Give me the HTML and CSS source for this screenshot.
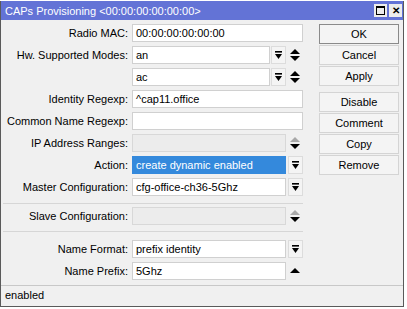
FILE: index.html
```html
<!DOCTYPE html>
<html lang="en">
<head>
    <meta charset="UTF-8">
    <title>CAPs Provisioning</title>
    <link rel="stylesheet" href="styles.css">
</head>
<body>

    <!-- Provisioning dialog -->
    <div class="window">
        <div class="titlebar">
            <span class="title">CAPs Provisioning &lt;00:00:00:00:00:00&gt;</span>
            <div class="win-btns">
                <span class="wbtn"><span class="max-icon"></span></span>
                <span class="wbtn close">&#x2715;</span>
            </div>
        </div>

        <div class="body">
            <!-- Fields -->
            <div class="form">
                <div class="row">
                    <label>Radio MAC:</label>
                    <div class="field"><span class="input full">00:00:00:00:00:00</span></div>
                </div>
                <div class="row">
                    <label>Hw. Supported Modes:</label>
                    <div class="field">
                        <span class="input combo">an</span>
                        <span class="dd-btn"><svg width="7" height="8" viewBox="0 0 7 8"><rect x="0" y="0" width="7" height="1.6"/><polygon points="0,3 7,3 3.5,8"/></svg></span>
                        <span class="updown"><svg width="10" height="12" viewBox="0 0 10 12"><polygon points="5,0 10,5 0,5"/><polygon points="0,7 10,7 5,12"/></svg></span>
                    </div>
                </div>
                <div class="row">
                    <label></label>
                    <div class="field">
                        <span class="input combo">ac</span>
                        <span class="dd-btn"><svg width="7" height="8" viewBox="0 0 7 8"><rect x="0" y="0" width="7" height="1.6"/><polygon points="0,3 7,3 3.5,8"/></svg></span>
                        <span class="updown"><svg width="10" height="12" viewBox="0 0 10 12"><polygon points="5,0 10,5 0,5"/><polygon points="0,7 10,7 5,12"/></svg></span>
                    </div>
                </div>
                <div class="row">
                    <label>Identity Regexp:</label>
                    <div class="field"><span class="input full">^cap11.office</span></div>
                </div>
                <div class="row">
                    <label>Common Name Regexp:</label>
                    <div class="field"><span class="input full"></span></div>
                </div>
                <div class="row">
                    <label>IP Address Ranges:</label>
                    <div class="field">
                        <span class="input wide disabled"></span>
                        <span class="updown"><svg width="10" height="12" viewBox="0 0 10 12"><polygon class="faded" points="5,0 10,5 0,5"/><polygon points="0,7 10,7 5,12"/></svg></span>
                    </div>
                </div>
                <div class="row">
                    <label>Action:</label>
                    <div class="field">
                        <span class="input wide selected">create dynamic enabled</span>
                        <span class="dd-btn gap"><svg width="7" height="8" viewBox="0 0 7 8"><rect x="0" y="0" width="7" height="1.6"/><polygon points="0,3 7,3 3.5,8"/></svg></span>
                    </div>
                </div>
                <div class="row">
                    <label>Master Configuration:</label>
                    <div class="field">
                        <span class="input wide">cfg-office-ch36-5Ghz</span>
                        <span class="dd-btn gap"><svg width="7" height="8" viewBox="0 0 7 8"><rect x="0" y="0" width="7" height="1.6"/><polygon points="0,3 7,3 3.5,8"/></svg></span>
                    </div>
                </div>

                <div class="sep sep-top"></div>

                <div class="row">
                    <label>Slave Configuration:</label>
                    <div class="field">
                        <span class="input wide disabled"></span>
                        <span class="updown"><svg width="10" height="12" viewBox="0 0 10 12"><polygon class="faded" points="5,0 10,5 0,5"/><polygon points="0,7 10,7 5,12"/></svg></span>
                    </div>
                </div>

                <div class="sep sep-bottom"></div>

                <div class="row">
                    <label>Name Format:</label>
                    <div class="field">
                        <span class="input wide">prefix identity</span>
                        <span class="dd-btn gap"><svg width="7" height="8" viewBox="0 0 7 8"><rect x="0" y="0" width="7" height="1.6"/><polygon points="0,3 7,3 3.5,8"/></svg></span>
                    </div>
                </div>
                <div class="row">
                    <label>Name Prefix:</label>
                    <div class="field">
                        <span class="input wide">5Ghz</span>
                        <span class="updown"><svg width="10" height="6" viewBox="0 0 10 6"><polygon points="5,0 10,5 0,5"/></svg></span>
                    </div>
                </div>
            </div>

            <!-- Buttons on the right -->
            <div class="actions">
                <button class="btn default">OK</button>
                <button class="btn">Cancel</button>
                <button class="btn">Apply</button>
                <button class="btn group">Disable</button>
                <button class="btn">Comment</button>
                <button class="btn">Copy</button>
                <button class="btn">Remove</button>
            </div>
        </div>

        <!-- Status bar -->
        <div class="status">enabled</div>
    </div>

</body>
</html>
```

FILE: styles.css
```css
/* Page */
body {
    margin: 0;
    background: #ffffff;
    font-family: "Liberation Sans", Arial, sans-serif;
    font-size: 11px;
    color: #000;
}

/* Dialog window */
.window {
    width: 402px;
    margin-top: 1px;
    border: 1px solid #5a5a5a;
    border-top: none;
    background: #f0f0f0;
}

/* Title bar */
.titlebar {
    height: 19px;
    background: #6373d6;
    display: flex;
    align-items: center;
    justify-content: space-between;
    padding-left: 4px;
    padding-right: 1px;
}

.title {
    color: #fff;
    font-size: 11px;
}

.win-btns {
    display: flex;
    gap: 2px;
}

.wbtn {
    width: 13px;
    height: 13px;
    background: #ececec;
    display: flex;
    align-items: center;
    justify-content: center;
}

.max-icon {
    width: 7px;
    height: 6px;
    border: 1px solid #000;
    border-top-width: 2px;
}

.wbtn.close {
    font-size: 10px;
    font-weight: bold;
}

/* Body: form + buttons */
.body {
    display: flex;
    padding-top: 4px;
}

.form {
    width: 302px;
}

.row {
    display: grid;
    grid-template-columns: 127px 171px;
    column-gap: 4px;
    align-items: center;
    height: 18px;
    margin-bottom: 4px;
}

.row label {
    text-align: right;
}

.field {
    display: flex;
    align-items: center;
    height: 18px;
}

/* Input boxes */
.input {
    box-sizing: border-box;
    height: 18px;
    line-height: 16px;
    padding-left: 3px;
    background: #fff;
    border: 1px solid #d0d0d0;
    white-space: nowrap;
    overflow: hidden;
}

.input.full {
    width: 171px;
}

.input.combo {
    width: 138px;
}

.input.wide {
    width: 154px;
}

.input.disabled {
    background: #ececec;
    border-color: #d8d8d8;
}

.input.selected {
    background: #3489dc;
    border-color: #3489dc;
    color: #fff;
}

/* Dropdown button */
.dd-btn {
    box-sizing: border-box;
    width: 15px;
    height: 18px;
    margin-left: 1px;
    background: #f4f4f4;
    border: 1px solid #dcdcdc;
    display: flex;
    align-items: center;
    justify-content: center;
}

.dd-btn.gap {
    margin-left: 2px;
}

/* Up / down arrows */
.updown {
    flex: 1;
    display: flex;
    align-items: center;
    justify-content: center;
}

.faded {
    fill: #a8a8a8;
}

/* Separators */
.sep {
    height: 1px;
    background: #d6d6d6;
    margin-left: 2px;
}

.sep-top {
    margin-top: 7px;
    margin-bottom: 3px;
}

.sep-bottom {
    margin-top: 6px;
    margin-bottom: 8px;
}

/* Right-hand buttons */
.actions {
    display: flex;
    flex-direction: column;
    gap: 1px;
    margin-left: 16px;
}

.btn {
    width: 80px;
    height: 20px;
    padding: 0;
    font-family: inherit;
    font-size: 11px;
    background: #f4f4f4;
    border: 1px solid #d4d4d4;
}

.btn.default {
    border-color: #8a8a8a;
}

.btn.group {
    margin-top: 5px;
}

/* Status bar */
.status {
    margin-top: 1px;
    border-top: 1px solid #c8c8c8;
    height: 20px;
    line-height: 19px;
    padding-left: 4px;
}
```
